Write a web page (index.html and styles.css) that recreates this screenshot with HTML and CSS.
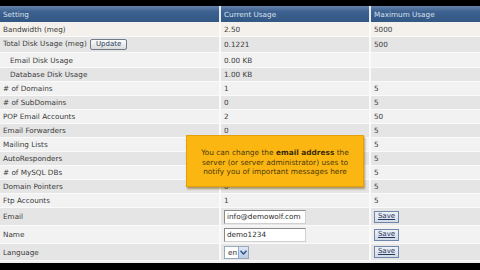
FILE: index.html
```html
<!DOCTYPE html>
<html>
<head>
<meta charset="utf-8">
<link rel="stylesheet" href="styles.css">
</head>
<body>
<div class="frame">
  <table class="usage">
    <colgroup><col class="c1"><col class="c2"><col class="c3"></colgroup>
    <thead>
      <tr><th>Setting</th><th>Current Usage</th><th>Maximum Usage</th></tr>
    </thead>
    <tbody>
      <tr class="r15 cream"><td>Bandwidth (meg)</td><td>2.50</td><td>5000</td></tr>
      <tr class="r16 dark"><td>Total Disk Usage (meg) <span class="btn upd">Update</span></td><td>0.1221</td><td>500</td></tr>
      <tr class="r15 light"><td class="ind">Email Disk Usage</td><td>0.00 KB</td><td></td></tr>
      <tr class="dark"><td class="ind">Database Disk Usage</td><td>1.00 KB</td><td></td></tr>
      <tr class="light"><td># of Domains</td><td>1</td><td>5</td></tr>
      <tr class="dark"><td># of SubDomains</td><td>0</td><td>5</td></tr>
      <tr class="light"><td>POP Email Accounts</td><td>2</td><td>50</td></tr>
      <tr class="dark"><td>Email Forwarders</td><td>0</td><td>5</td></tr>
      <tr class="light"><td>Mailing Lists</td><td>0</td><td>5</td></tr>
      <tr class="dark"><td>AutoResponders</td><td>0</td><td>5</td></tr>
      <tr class="light"><td># of MySQL DBs</td><td>0</td><td>5</td></tr>
      <tr class="dark"><td>Domain Pointers</td><td>0</td><td>5</td></tr>
      <tr class="light"><td>Ftp Accounts</td><td>1</td><td>5</td></tr>
      <tr class="r18 dark"><td>Email</td><td><span class="field">info@demowolf.com</span></td><td><span class="btn save">Save</span></td></tr>
      <tr class="r18 light"><td>Name</td><td><span class="field">demo1234</span></td><td><span class="btn save">Save</span></td></tr>
      <tr class="r17 dark"><td>Language</td><td><span class="sel">en<span class="arrow"><svg width="7" height="5" viewBox="0 0 7 5"><path d="M0.5 0.8 L3.5 4 L6.5 0.8" fill="none" stroke="#2b4f80" stroke-width="1.4"/></svg></span></span></td><td><span class="btn save">Save</span></td></tr>
    </tbody>
  </table>
  <div class="tip">You can change the <b>email address</b> the<br>server (or server administrator) uses to<br>notify you of important messages here</div>
</div>
</body>
</html>
```
FILE: styles.css
```css
html, body { margin: 0; padding: 0; }
body {
  background: #000;
  width: 480px;
  height: 270px;
  overflow: hidden;
  font-family: "DejaVu Sans", Verdana, sans-serif;
}
.frame {
  position: relative;
  margin-top: 6px;
  height: 257px;
  background: #f1f1f1;
  overflow: hidden;
}
.usage {
  width: 482px;
  table-layout: fixed;
  border-collapse: collapse;
  font-size: 7.25px;
  color: #3a3a3a;
}
.c1 { width: 220px; }
.c2 { width: 150px; }
.c3 { width: 112px; }
.usage th {
  height: 16px;
  padding: 0 0 0 3px;
  text-align: left;
  font-weight: normal;
  color: #d6e0ec;
  background: linear-gradient(#6583ab, #3d6190 35%, #345884 100%);
  border-left: 2px solid #e8eef4;
}
.usage th:first-child { border-left: none; }
.usage td {
  height: 13px;
  padding: 0 0 0 3px;
  border-bottom: 1px solid #fafafa;
  border-left: 2px solid #fafafa;
  white-space: nowrap;
  vertical-align: middle;
}
.usage td:first-child { border-left: none; }
.usage td.ind { padding-left: 10px; }
.r15 td { height: 14px; }
.r16 td { height: 15px; }
.r18 td { height: 17px; }
.r17 td { height: 16px; }
.light td { background: #f2f2f2; }
.dark td { background: #e5e5e5; }
.cream td { background: #f4f1ec; }
.btn {
  display: inline-block;
  box-sizing: border-box;
  vertical-align: middle;
  font-size: 7px;
  line-height: 9px;
  text-align: center;
}
.upd {
  margin-left: 1px;
  width: 37px;
  height: 11px;
  border: 1px solid #6e7a8a;
  border-radius: 2px;
  background: linear-gradient(#fbfbfb, #dcdcdc);
  color: #2a3d60;
}
.save {
  width: 25px;
  height: 12px;
  border: 1px solid #6f86aa;
  background: linear-gradient(#eef1f6, #d3dae6);
  color: #22385e;
  text-decoration: underline;
}
.field {
  display: inline-block;
  box-sizing: border-box;
  vertical-align: middle;
  width: 82px;
  height: 14px;
  padding-left: 2px;
  line-height: 12px;
  background: #fff;
  border: 1px solid #a9a9a9;
  border-color: #8a8a8a #d0d0d0 #d0d0d0 #8a8a8a;
  color: #2a2a2a;
}
.sel {
  display: inline-flex;
  align-items: center;
  box-sizing: border-box;
  vertical-align: middle;
  width: 25px;
  height: 13px;
  padding-left: 3px;
  background: #fff;
  border: 1px solid #9aa8bb;
  color: #2a2a2a;
}
.arrow {
  margin-left: auto;
  width: 9px;
  height: 11px;
  display: flex;
  align-items: center;
  justify-content: center;
  background: linear-gradient(#dfe8f6, #b9cbe6);
  border-left: 1px solid #8ea6c9;
}
.tip {
  position: absolute;
  left: 186px;
  top: 129px;
  width: 178px;
  height: 52px;
  box-sizing: border-box;
  padding-top: 12px;
  background: #fbb612;
  border: 1px solid #e5a10a;
  box-shadow: 1px 2px 2px rgba(120, 80, 0, 0.55);
  color: #4d3a08;
  font-size: 7.4px;
  line-height: 9.5px;
  text-align: center;
}
.tip b { color: #3a2a00; }
```
